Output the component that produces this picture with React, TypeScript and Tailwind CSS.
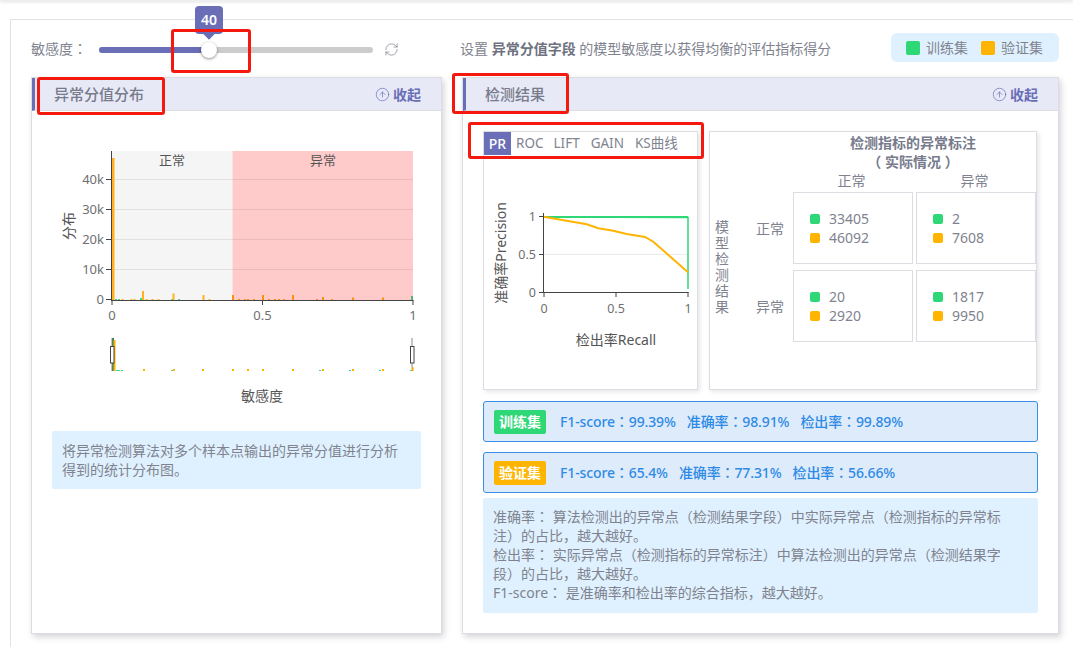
import React from "react";
import { CircleArrowUp, RefreshCw } from "lucide-react";

const FONT = "font-['Noto_Sans','Noto_Sans_CJK_SC',sans-serif]";
const Tc = ({ children }: { children: string }) => <span className="font-['Noto_Sans_CJK_TC',sans-serif]">{children}</span>;
const Zh = ({ text }: { text: string }) => (
  <>
    {text.split(/([（）：])/).map((part, i) => (/[（）：]/.test(part) ? <Tc key={i}>{part}</Tc> : <React.Fragment key={i}>{part}</React.Fragment>))}
  </>
);
const Redbox = ({ c }: { c: string }) => (
  <div className={"absolute border-[3px] border-[#f5180f] rounded-[3px] pointer-events-none " + c} />
);

const Panel = ({ title, width, children }: { title: string; width: string; children: React.ReactNode }) => (
  <section className={"h-[557px] flex flex-col bg-white border border-[#dcdde3] shadow-[2px_3px_6px_rgba(60,60,80,0.22)] " + width}>
    <header className="h-[33px] shrink-0 flex items-center justify-between bg-[#e7e9f6] border-b border-[#dcdde3] border-l-[3px] border-l-[#696eb6] pl-[19px] pr-[20px]">
      <h2 className="text-[15px] font-medium text-[#777b8c]">{title}</h2>
      <span className="flex items-center gap-[3px] text-[14px] font-semibold text-[#696eb6]">
        <CircleArrowUp size={15} strokeWidth={1.1} />
        收起
      </span>
    </header>
    {children}
  </section>
);

const spikes: [number, number, string][] = [
  [115, 1, "#3ddc84"], [118, 1, "#3ddc84"], [121.5, 1, "#ffb21e"], [130.5, 1, "#ffb21e"], [133.5, 1, "#ffb21e"],
  [140, 2, "#3ddc84"], [142, 9, "#ffb21e"], [145.5, 1, "#ffb21e"], [151.5, 1, "#ffb21e"], [157.5, 1, "#ffb21e"],
  [171, 1, "#3ddc84"], [172.5, 6.5, "#ffb21e"], [178, 1, "#3ddc84"], [202.5, 5, "#ffb21e"], [208.5, 1, "#ffb21e"],
  [232, 5, "#ff8f10"], [238, 1, "#ff8f10"], [244, 1, "#ff8f10"], [247, 1, "#ff8f10"], [253, 1, "#ff8f10"],
  [262, 5, "#ff8f10"], [268, 1, "#ff8f10"], [274, 1, "#ff8f10"], [278, 1, "#ff8f10"], [283, 1, "#ff8f10"],
  [292, 5, "#ff8f10"], [316, 1, "#ff8f10"], [322, 3, "#ff8f10"], [331, 1, "#ff8f10"], [352, 2.5, "#ff8f10"],
  [382, 2.5, "#ff8f10"], [411, 4, "#55b577"],
];
const miniSpikes: number[] = [143, 173, 202, 232, 247, 262, 292, 322, 352, 382];

const DistChart = () => (
  <svg width={380} height={270} viewBox="50 140 380 270" className="block ml-[18px] mt-[29px]">
    <rect x={112} y={151} width={120.5} height={149} fill="#f5f5f5" />
    <rect x={232.5} y={151} width={180.5} height={149} fill="#ffcaca" />
    {[179.5, 209.5, 239.5, 269.5].map((y) => (
      <line key={y} x1={112} x2={413} y1={y} y2={y} stroke="#000" strokeOpacity={0.08} />
    ))}
    <rect x={112} y={158} width={2.5} height={142} fill="#ffb21e" />
    {spikes.map(([x, h, c], i) => (
      <rect key={i} x={x} y={300 - h} width={2} height={h} fill={c} />
    ))}
    <line x1={111.5} x2={111.5} y1={151} y2={300} stroke="#444" />
    <line x1={111} x2={413.5} y1={300.5} y2={300.5} stroke="#444" />
    {[179.5, 209.5, 239.5, 269.5, 299.5].map((y) => (
      <line key={y} x1={106} x2={111} y1={y} y2={y} stroke="#444" />
    ))}
    {[112, 262.5, 413].map((x) => (
      <line key={x} x1={x} x2={x} y1={300} y2={305} stroke="#444" />
    ))}
    <g fontSize={13} fill="#6f6f6f" fontFamily="'Noto Sans','Noto Sans CJK SC',sans-serif">
      <text x={104} y={184} textAnchor="end">40k</text>
      <text x={104} y={214} textAnchor="end">30k</text>
      <text x={104} y={244} textAnchor="end">20k</text>
      <text x={104} y={274} textAnchor="end">10k</text>
      <text x={104} y={304} textAnchor="end">0</text>
      <text x={112} y={320} textAnchor="middle">0</text>
      <text x={262.5} y={320} textAnchor="middle">0.5</text>
      <text x={413} y={320} textAnchor="middle">1</text>
      <text x={172} y={165} textAnchor="middle" fill="#555">正常</text>
      <text x={323} y={165} textAnchor="middle" fill="#555">异常</text>
      <text x={262} y={401} textAnchor="middle" fontSize={14} fill="#555">敏感度</text>
      <text transform="translate(74 226) rotate(-90)" textAnchor="middle" fontSize={14} fill="#555">分布</text>
    </g>
    <rect x={112} y={338} width={2} height={33} fill="#2e7d4a" />
    <rect x={113.5} y={340} width={2} height={31} fill="#ffb400" />
    {miniSpikes.map((x) => (
      <rect key={x} x={x} y={369} width={2} height={2} fill="#ffb400" />
    ))}
    {[116, 118, 121, 171, 319, 349, 379, 410].map((x) => (
      <rect key={x} x={x} y={370} width={2} height={1} fill="#3ddc84" />
    ))}
    <rect x={411.5} y={367} width={2} height={4} fill="#ff9d10" />
    <line x1={112} x2={112} y1={338} y2={371} stroke="#888" />
    <line x1={412} x2={412} y1={338} y2={367} stroke="#888" />
    <rect x={110.5} y={346.5} width={3.5} height={16.5} fill="#fff" stroke="#444" />
    <rect x={410.5} y={346.5} width={3.5} height={16.5} fill="#fff" stroke="#444" />
  </svg>
);

const PrChart = () => (
  <svg width={213} height={234} viewBox="484 156 213 234" className="block">
    <line x1={543.5} x2={688} y1={255.5} y2={255.5} stroke="#000" strokeOpacity={0.08} />
    <polyline points="543.5,218 688,218.5 688,290" fill="none" stroke="#2fd877" strokeWidth={1.5} />
    <line x1={543.5} x2={688} y1={218} y2={218} stroke="#2fd877" strokeWidth={2} />
    <polyline
      points="543.5,217.7 586.7,225.3 598.3,229.3 613.3,231.7 626.7,235 645,238 653.3,242.7 688,273.3"
      fill="none"
      stroke="#ffb400"
      strokeWidth={2}
    />
    <line x1={543.5} x2={543.5} y1={214} y2={293.5} stroke="#444" />
    <line x1={543} x2={688.5} y1={293.5} y2={293.5} stroke="#444" />
    {[217.5, 255.5, 293.5].map((y) => (
      <line key={y} x1={539} x2={543} y1={y} y2={y} stroke="#444" />
    ))}
    {[544, 616, 688].map((x) => (
      <line key={x} x1={x} x2={x} y1={293} y2={298} stroke="#444" />
    ))}
    <g fontSize={12.5} fill="#6f6f6f" fontFamily="'Noto Sans','Noto Sans CJK SC',sans-serif">
      <text x={536} y={222} textAnchor="end">1</text>
      <text x={536} y={260} textAnchor="end">0.5</text>
      <text x={536} y={298} textAnchor="end">0</text>
      <text x={544} y={314} textAnchor="middle">0</text>
      <text x={616} y={314} textAnchor="middle">0.5</text>
      <text x={688} y={314} textAnchor="middle">1</text>
      <text x={616} y={346} textAnchor="middle" fontSize={14} fill="#555">检出率Recall</text>
      <text transform="translate(506 254) rotate(-90)" textAnchor="middle" fontSize={14} fill="#555">准确率Precision</text>
    </g>
  </svg>
);

const Cell = ({ a, b }: { a: number; b: number }) => (
  <div className="border border-[#dcdde3] flex flex-col justify-center pl-[16px] text-[14px] leading-[19px] text-[#80838f]">
    <div className="flex items-center gap-[9px]"><i className="w-[10px] h-[10px] rounded-[2px] bg-[#2fd877]" />{a}</div>
    <div className="flex items-center gap-[9px]"><i className="w-[10px] h-[10px] rounded-[2px] bg-[#ffb400]" />{b}</div>
  </div>
);

const Score = ({ badge, color, vals, mt }: { badge: string; color: string; vals: string[]; mt: string }) => (
  <div className={"h-[41px] flex items-center rounded-[3px] border border-[#3a8ee6] bg-[#deebfa] pl-[10px] text-[14px] font-medium tracking-[-0.12px] text-[#2d8ae6] " + mt}>
    <span className={"w-[52px] h-[24px] rounded-[2px] flex items-center justify-center text-white font-bold tracking-normal text-[14px] mr-[14px] " + color}>{badge}</span>
    <span><Zh text={"F1-score：" + vals[0]} /></span>
    <span className="ml-[11px]"><Zh text={"准确率：" + vals[1]} /></span>
    <span className="ml-[11px]"><Zh text={"检出率：" + vals[2]} /></span>
  </div>
);

export default function App() {
  return (
    <div className={"relative w-[1073px] h-[647px] overflow-hidden bg-white " + FONT}>
      <div className="h-[1px] bg-[#eee] shadow-[0_1px_3px_rgba(0,0,0,0.22)]" />
      <main className="mt-[18px] ml-[10px] h-[640px] border-l border-t border-[#e1e1e6] pl-[20px] pr-[14px]">
        <div className="h-[57px] flex items-center text-[14px] text-[#80838f]">
          <span className="w-[68px]"><Zh text="敏感度：" /></span>
          <div className="relative w-[274px] h-[6px] mt-[2px] rounded-full bg-[#cccccc]">
            <div className="w-[110px] h-full rounded-full bg-[#696eb6]" />
            <div className="absolute left-[102px] top-[-5px] w-[16px] h-[16px] rounded-full bg-white shadow-[0_1px_3px_rgba(0,0,0,0.45)]" />
            <div className="absolute left-[96px] top-[-41px] w-[28px] h-[28px] rounded-[4px] bg-[#696eb6] text-white font-semibold text-[14px] flex items-center justify-center">
              40
              <span className="absolute bottom-[-4px] left-[10px] w-[8px] h-[8px] rotate-45 bg-[#696eb6]" />
            </div>
          </div>
          <RefreshCw size={15} strokeWidth={1.25} className="ml-[11px] mt-[1px] text-[#868a96]" />
          <p className="ml-[61px]">设置 <b className="font-semibold text-[#6f7280]">异常分值字段</b> 的模型敏感度以获得均衡的评估指标得分</p>
          <div className="ml-auto mt-[-2px] w-[168px] h-[29px] rounded-[6px] bg-[#dff1fe] flex items-center pl-[15px]">
            <i className="w-[14px] h-[14px] rounded-[2px] bg-[#2fd877] mr-[6px]" />训练集
            <i className="w-[14px] h-[14px] rounded-[2px] bg-[#ffb400] ml-[13px] mr-[6px]" />验证集
          </div>
        </div>
        <div className="flex gap-[20px]">
          <Panel title="异常分值分布" width="w-[411px]">
            <DistChart />
            <p className="mt-[21px] mx-[20px] h-[58px] rounded-[2px] bg-[#dff1fe] px-[10px] py-[10px] text-[14px] leading-[19px] text-[#80838f]">
              将异常检测算法对多个样本点输出的异常分值进行分析得到的统计分布图。
            </p>
          </Panel>
          <Panel title="检测结果" width="w-[597px]">
            <div className="pl-[20px] pr-[20px] pt-[20px]">
              <div className="flex gap-[11px] h-[259px]">
                <div className="w-[215px] border border-[#dcdde3] shadow-[2px_2px_4px_rgba(60,60,80,0.12)]">
                  <div className="h-[23px] flex items-center text-[13.5px] text-[#80838f]">
                    <span className="w-[27px] h-[23px] bg-[#696eb6] text-white font-medium text-[14px] flex items-center justify-center mr-[5px]">PR</span>
                    <span className="mr-[10px]">ROC</span>
                    <span className="mr-[11px]">LIFT</span>
                    <span className="mr-[11px]">GAIN</span>
                    <span>KS曲线</span>
                  </div>
                  <PrChart />
                </div>
                <div className="w-[328px] border border-[#dcdde3] shadow-[2px_2px_4px_rgba(60,60,80,0.12)]">
                  <div className="pl-[81px] pr-[1px] text-center text-[14px] leading-[19px] font-semibold text-[#777b8c] pt-[1px]">
                    <div>检测指标的异常标注</div>
                    <div><Zh text="（ 实际情况 ）" /></div>
                  </div>
                  <div className="ml-[83px] grid grid-cols-[120px_120px] gap-x-[3px] text-center text-[14px] text-[#80838f] leading-[20px] mb-[1px]">
                    <span className="pr-[3px]">正常</span><span className="pr-[3px]">异常</span>
                  </div>
                  <div className="flex">
                    <div className="w-[46px] pl-[5px] flex items-center text-[14px] leading-[16px] text-[#80838f]">
                      <span className="w-[14px] text-center">模型检测结果</span>
                    </div>
                    <div className="w-[37px] grid grid-rows-[72px_72px] gap-y-[6px] text-[14px] text-[#80838f]">
                      <span className="flex items-center">正常</span>
                      <span className="flex items-center">异常</span>
                    </div>
                    <div className="grid grid-cols-[120px_120px] grid-rows-[72px_72px] gap-x-[3px] gap-y-[6px]">
                      <Cell a={33405} b={46092} />
                      <Cell a={2} b={7608} />
                      <Cell a={20} b={2920} />
                      <Cell a={1817} b={9950} />
                    </div>
                  </div>
                </div>
              </div>
              <Score mt="mt-[11px]" badge="训练集" color="bg-[#2fd877]" vals={["99.39%", "98.91%", "99.89%"]} />
              <Score mt="mt-[10px]" badge="验证集" color="bg-[#ffb400]" vals={["65.4%", "77.31%", "56.66%"]} />
              <div className="mt-[5px] h-[115px] rounded-[2px] bg-[#dff1fe] pl-[10px] pr-[25px] py-[9px] text-[14px] leading-[19px] text-[#80838f]">
                <p><Zh text="准确率： 算法检测出的异常点（检测结果字段）中实际异常点（检测指标的异常标注）的占比，越大越好。" /></p>
                <p><Zh text="检出率： 实际异常点（检测指标的异常标注）中算法检测出的异常点（检测结果字段）的占比，越大越好。" /></p>
                <p><Zh text="F1-score： 是准确率和检出率的综合指标，越大越好。" /></p>
              </div>
            </div>
          </Panel>
        </div>
      </main>
      <Redbox c="left-[171px] top-[29px] w-[80px] h-[44px]" />
      <Redbox c="left-[37px] top-[77px] w-[128px] h-[38px]" />
      <Redbox c="left-[452px] top-[73px] w-[117px] h-[41px]" />
      <Redbox c="left-[468px] top-[122px] w-[236px] h-[37px]" />
    </div>
  );
}
